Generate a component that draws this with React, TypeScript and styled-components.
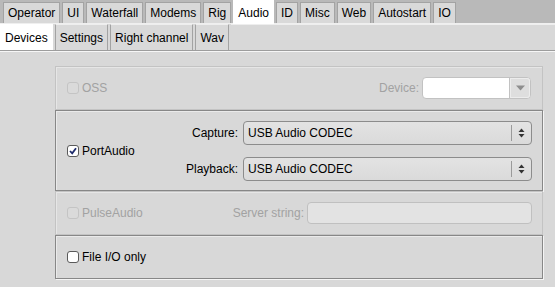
import React from 'react';
import styled, { createGlobalStyle } from 'styled-components';

const Global = createGlobalStyle`
  html, body { margin: 0; padding: 0; background: #d8d8d8; }
  body {
    font-family: "Liberation Sans", Arial, Helvetica, sans-serif;
    font-size: 12px;
    color: #000;
  }
`;

const Window = styled.div`
  width: 555px;
  height: 287px;
  display: flex;
  flex-direction: column;
  background: #d8d8d8;
  overflow: hidden;
`;

const TopBar = styled.div`
  height: 24px;
  box-sizing: border-box;
  background: #b9b9b9;
  border-bottom: 1px solid #efefef;
  display: flex;
  align-items: flex-end;
  padding-left: 3px;
  gap: 2px;
`;

const TopTab = styled.div<{ $active?: boolean }>`
  box-sizing: border-box;
  height: ${(p) => (p.$active ? '24px' : '21px')};
  margin-bottom: ${(p) => (p.$active ? '-1px' : '0')};
  padding: 0 4px;
  display: flex;
  align-items: center;
  background: ${(p) => (p.$active ? '#ffffff' : '#d9d9d9')};
  border: 1px solid ${(p) => (p.$active ? '#ffffff' : '#a3a3a3')};
  border-bottom: none;
  white-space: nowrap;
  position: relative;
  z-index: ${(p) => (p.$active ? 1 : 0)};
`;

const SubBar = styled.div`
  height: 27px;
  box-sizing: border-box;
  background: #d8d8d8;
  border-bottom: 1px solid #9d9d9d;
  display: flex;
  align-items: stretch;
  gap: 2px;
`;

const SubTab = styled.div<{ $active?: boolean }>`
  box-sizing: border-box;
  padding: 0 4px;
  display: flex;
  align-items: center;
  background: ${(p) => (p.$active ? '#ffffff' : '#d9d9d9')};
  border-left: 1px solid ${(p) => (p.$active ? '#ffffff' : '#a3a3a3')};
  border-right: 1px solid ${(p) => (p.$active ? '#ffffff' : '#a3a3a3')};
  border-top: 1px solid ${(p) => (p.$active ? '#ffffff' : '#eeeeee')};
  white-space: nowrap;
`;

const SubRest = styled.div`
  flex: 1;
  border-top: 1px solid #eeeeee;
`;

const Content = styled.div`
  flex: 1;
  border-top: 1px solid #f6f6f6;
  padding: 14px 12px 0 55px;
  display: flex;
  flex-direction: column;
`;

const Group = styled.div<{ $active?: boolean; $h: number }>`
  box-sizing: border-box;
  height: ${(p) => p.$h}px;
  border: 1px solid ${(p) => (p.$active ? '#878787' : '#c3c3c3')};
  box-shadow: ${(p) =>
    p.$active
      ? '1px 1px 0 #f4f4f4, inset 1px 1px 0 #eaeaea'
      : 'inset 1px 1px 0 #e6e6e6'};
  display: flex;
  align-items: center;
  padding: 0 10px 0 11px;
`;

const CheckLabel = styled.label<{ $disabled?: boolean }>`
  display: flex;
  align-items: center;
  gap: 3px;
  color: ${(p) => (p.$disabled ? '#a2a2a2' : '#000')};
  white-space: nowrap;
`;

const Box = styled.span<{ $disabled?: boolean }>`
  box-sizing: border-box;
  width: 12px;
  height: 12px;
  border-radius: 3px;
  border: 1px solid ${(p) => (p.$disabled ? '#c4c4c4' : '#5a5a5a')};
  background: ${(p) => (p.$disabled ? '#dadada' : '#ffffff')};
  display: flex;
  align-items: center;
  justify-content: center;
`;

const Spacer = styled.div`
  flex: 1;
`;

const FieldLabel = styled.span<{ $disabled?: boolean }>`
  color: ${(p) => (p.$disabled ? '#a2a2a2' : '#000')};
  white-space: nowrap;
  margin-right: 3px;
`;

const Combo = styled.div`
  box-sizing: border-box;
  width: 109px;
  height: 22px;
  margin-right: 1px;
  border: 1px solid #c2c2c2;
  border-radius: 4px;
  background: #ffffff;
  display: flex;
  justify-content: flex-end;
  overflow: hidden;
`;

const ComboButton = styled.div`
  box-sizing: border-box;
  width: 21px;
  height: 100%;
  background: #dedede;
  border-left: 1px solid #c2c2c2;
  border-radius: 0 3px 3px 0;
  box-shadow: inset 0 0 0 1px #ececec;
  display: flex;
  align-items: center;
  justify-content: center;
`;

const PortGrid = styled.div`
  margin-left: auto;
  display: grid;
  grid-template-columns: auto 289px;
  column-gap: 5px;
  row-gap: 12px;
  align-items: center;
  justify-items: end;
`;

const Select = styled.div`
  box-sizing: border-box;
  width: 289px;
  height: 24px;
  border: 1px solid #8c8c8c;
  border-radius: 4px;
  background: linear-gradient(#e3e3e3, #dadada);
  display: flex;
  align-items: center;
`;

const SelectText = styled.span`
  flex: 1;
  padding-left: 4px;
`;

const Stepper = styled.div`
  width: 19px;
  height: 16px;
  border-left: 1px solid #9a9a9a;
  display: flex;
  align-items: center;
  justify-content: center;
`;

const TextInput = styled.div`
  box-sizing: border-box;
  width: 225px;
  height: 22px;
  border: 1px solid #c0c0c0;
  border-radius: 4px;
  background: #e3e3e3;
`;

const Check = () => (
  <svg width="8" height="8" viewBox="0 0 8 8">
    <path d="M1 4 L3.2 6.4 L7 1.2" fill="none" stroke="#1d2a6b" strokeWidth="1.8" />
  </svg>
);

const UpDown = () => (
  <svg width="7" height="10" viewBox="0 0 7 10">
    <path d="M3.5 0.5 L6.5 4 L0.5 4 Z" fill="#333" />
    <path d="M3.5 9.5 L6.5 6 L0.5 6 Z" fill="#333" />
  </svg>
);

const Down = () => (
  <svg width="9" height="6" viewBox="0 0 9 6">
    <path d="M0 0.5 L9 0.5 L4.5 5.5 Z" fill="#8e8e8e" />
  </svg>
);

const topTabs = ['Operator', 'UI', 'Waterfall', 'Modems', 'Rig', 'Audio', 'ID', 'Misc', 'Web', 'Autostart', 'IO'];
const subTabs = ['Devices', 'Settings', 'Right channel', 'Wav'];

export default function App() {
  return (
    <Window>
      <Global />
      <TopBar>
        {topTabs.map((t) => (
          <TopTab key={t} $active={t === 'Audio'}>
            {t}
          </TopTab>
        ))}
      </TopBar>
      <SubBar>
        {subTabs.map((t) => (
          <SubTab key={t} $active={t === 'Devices'}>
            {t}
          </SubTab>
        ))}
        <SubRest />
      </SubBar>
      <Content>
        <Group $h={44}>
          <CheckLabel $disabled>
            <Box $disabled />
            OSS
          </CheckLabel>
          <Spacer />
          <FieldLabel $disabled>Device:</FieldLabel>
          <Combo>
            <ComboButton>
              <Down />
            </ComboButton>
          </Combo>
        </Group>
        <Group $active $h={81}>
          <CheckLabel>
            <Box>
              <Check />
            </Box>
            PortAudio
          </CheckLabel>
          <PortGrid>
            <span>Capture:</span>
            <Select>
              <SelectText>USB Audio CODEC</SelectText>
              <Stepper>
                <UpDown />
              </Stepper>
            </Select>
            <span>Playback:</span>
            <Select>
              <SelectText>USB Audio CODEC</SelectText>
              <Stepper>
                <UpDown />
              </Stepper>
            </Select>
          </PortGrid>
        </Group>
        <Group $h={44}>
          <CheckLabel $disabled>
            <Box $disabled />
            PulseAudio
          </CheckLabel>
          <Spacer />
          <FieldLabel $disabled>Server string:</FieldLabel>
          <TextInput />
        </Group>
        <Group $active $h={44}>
          <CheckLabel>
            <Box />
            File I/O only
          </CheckLabel>
        </Group>
      </Content>
    </Window>
  );
}
